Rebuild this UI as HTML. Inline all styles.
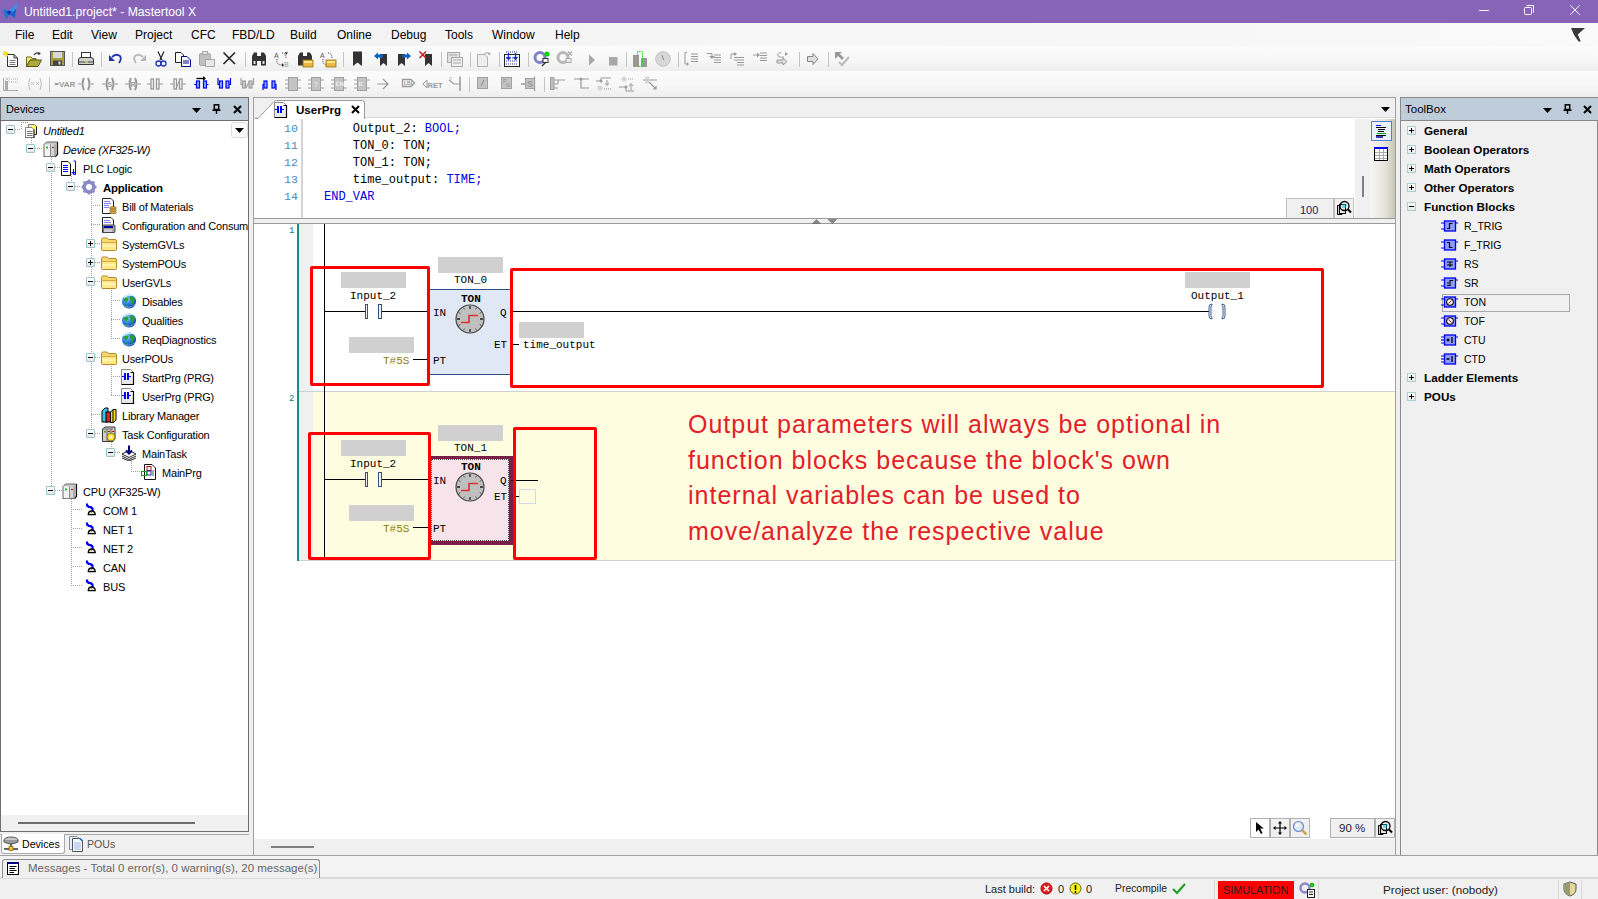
<!DOCTYPE html><html><head><meta charset="utf-8"><style>
*{margin:0;padding:0;box-sizing:border-box}
html,body{width:1598px;height:899px;overflow:hidden;background:#f0f0f0;font-family:"Liberation Sans",sans-serif;font-size:11px;color:#000}
.a{position:absolute}
.t{position:absolute;white-space:nowrap;line-height:1}
.m{font-family:"Liberation Mono",monospace}
.ic{position:absolute;overflow:visible}
.exp{position:absolute;width:9px;height:9px;border:1px solid #9cc4cc;border-radius:1px;background:linear-gradient(#fff,#e6e6e6)}
.exp:before{content:"";position:absolute;left:1px;top:3px;width:5px;height:1px;background:#000}
.exp.p:after{content:"";position:absolute;left:3px;top:1px;width:1px;height:5px;background:#000}
.vd{position:absolute;width:1px;background:repeating-linear-gradient(to bottom,#a0a0a0 0 1px,transparent 1px 2px)}
.hd{position:absolute;height:1px;background:repeating-linear-gradient(to right,#a0a0a0 0 1px,transparent 1px 2px)}
.tbx{position:absolute;width:9px;height:9px;border:1px solid #a8d0d4;background:linear-gradient(#fff,#e8e8e8)}
.tbx:before{content:"";position:absolute;left:1px;top:3px;width:5px;height:1px;background:#000}
.tbx.p:after{content:"";position:absolute;left:3px;top:1px;width:1px;height:5px;background:#000}
.gr{position:absolute;background:#d0d0d0}
.rb{position:absolute;border:3px solid #ff0000;border-radius:2px}
</style></head><body>
<svg width="0" height="0" style="position:absolute"><defs><symbol id="i_proj" viewBox="0 0 16 16"><path d="M7.5 12.5 V2.5 H13.5 L15.5 4.5 V12.5Z" fill="#ffff40" stroke="#777"/><path d="M9 4H13M10 6H14M9 8H14M10 10H14" stroke="#fff" stroke-dasharray="1 1"/><path d="M15.5 4.5V12.5H13" stroke="#222" fill="none"/><path d="M4.5 16 V5.5 H11 L13 7.5 V16Z" fill="#fff" stroke="#888"/><path d="M13 7.5V16H4.5" stroke="#222" fill="none"/><path d="M6 9.5H11.5M6 11.5H11.5M6 13.5H11.5" stroke="#777"/><path d="M0 0.5H8M0.5 0V8" stroke="#999" stroke-dasharray="1 1"/></symbol>
<symbol id="i_dev" viewBox="0 0 16 16"><path d="M1 3.5 L3.5 1 H14.5 V13.5 L12 16 H1Z" fill="#c8c8c8"/><path d="M1 3.5 H12 V16 H1Z" fill="#d4d4d4"/><path d="M1 3.5 H7 V16 H1Z" fill="#f4f4f4"/><path d="M1 16 V3.5 L3.5 1 H14.5" stroke="#666" fill="none"/><path d="M14.5 1 V13.5 L12 16 H1" stroke="#111" fill="none" stroke-width="1.2"/><path d="M7.5 3.5V16M12 3.5V16" stroke="#888"/><rect x="3" y="5.5" width="2" height="2" fill="#00d000"/><rect x="9" y="6" width="2" height="1" fill="#c00000"/></symbol>
<symbol id="i_plc" viewBox="0 0 16 16"><path d="M0.5 1.5 H7 L9.5 4 V15.5 H0.5Z" fill="#fff" stroke="#111"/><path d="M2 5.5H7M2 7.5H7M2 9.5H7M2 11.5H7" stroke="#0000ff"/><path d="M12.5 1 H14.5 V14.5 H12.5 M12.5 9 V14 M11 12 L12.5 14 L14 12" stroke="#0000ff" fill="none"/></symbol>
<symbol id="i_gear" viewBox="0 0 16 16"><circle cx="8" cy="8" r="6" fill="#8b8bc8" stroke="#6a6aa8"/><g stroke="#8b8bc8" stroke-width="2.4"><path d="M8 0.5V15.5M0.5 8H15.5M2.7 2.7L13.3 13.3M13.3 2.7L2.7 13.3"/></g><circle cx="8" cy="8" r="3" fill="#fff"/></symbol>
<symbol id="i_bom" viewBox="0 0 16 16"><path d="M1.5 0.5 H10 L12.5 3 V15.5 H1.5Z" fill="#fff" stroke="#222"/><path d="M3 3.5H9M3 5.5H10M3 7.5H8M3 9.5H8" stroke="#8080ff"/><ellipse cx="12" cy="10" rx="3.3" ry="1.4" fill="#d8b050" stroke="#8a6a20" stroke-width=".8"/><ellipse cx="12" cy="12.3" rx="3.3" ry="1.4" fill="#d8b050" stroke="#8a6a20" stroke-width=".8"/><ellipse cx="12" cy="14.5" rx="3.3" ry="1.4" fill="#d8b050" stroke="#8a6a20" stroke-width=".8"/></symbol>
<symbol id="i_cfg" viewBox="0 0 16 16"><path d="M1.5 0.5 H10 L12.5 3 V15.5 H1.5Z" fill="#fff" stroke="#222"/><path d="M3 3.5H9M3 5.5H10" stroke="#8080ff"/><rect x="2" y="8" width="12" height="7.5" rx="1" fill="#a8a8a8" stroke="#444"/><rect x="3" y="9" width="9" height="2" fill="#0000a0"/><path d="M4 12.5V15M6 12.5V15M8 12.5V15M10 12.5V15" stroke="#fff"/></symbol>
<symbol id="i_folder" viewBox="0 0 16 16"><path d="M0.5 3.5 Q0.5 2 2 2 H6 L7.5 3.5 H14 Q15.5 3.5 15.5 5 V13.5 Q15.5 14.5 14.5 14.5 H1.5 Q0.5 14.5 0.5 13.5Z" fill="#f8d868" stroke="#b58a2a"/><path d="M1 7 H15 V14 H1Z" fill="#ffe88a"/><path d="M1 10 H15" stroke="#fff3b0" stroke-width="2"/><path d="M0.5 6.5 H15.5" stroke="#c8a040" stroke-width=".8"/></symbol>
<symbol id="i_globe" viewBox="0 0 16 16"><defs><radialGradient id="ggl" cx=".35" cy=".3" r=".8"><stop offset="0" stop-color="#8fd0ff"/><stop offset=".5" stop-color="#2a7ae8"/><stop offset="1" stop-color="#0a2a90"/></radialGradient></defs><circle cx="8" cy="8.5" r="7" fill="url(#ggl)"/><path d="M2.5 6 Q5 3.5 7.5 5.5 Q7 8.5 5 9.5 Q3 8.5 2.5 6Z M9 3.5 Q12.5 3 14 6.5 Q13 9.5 11 12.5 Q9 11 9.8 8 Q8.5 6 9 3.5Z M4.5 11.5 Q7 11.5 7.5 14.5 Q5 14.5 4.5 11.5Z" fill="#2aa030"/><path d="M3 4.5 Q8 0 14.5 3.5" stroke="#e0f4ff" stroke-width="1.3" fill="none"/><path d="M1.5 12 Q8 17 14.5 11" stroke="#70b8f0" stroke-width=".8" fill="none"/></symbol>
<symbol id="i_prg" viewBox="0 0 16 16"><defs><linearGradient id="gprg" x1="0" y1="0" x2="0" y2="1"><stop offset="0" stop-color="#fff"/><stop offset="1" stop-color="#e4e4e4"/></linearGradient></defs><path d="M0.5 15.5 V0.5 H9.5 L12.5 3.5 V15.5Z" fill="url(#gprg)"/><path d="M0.5 15.5 V0.5 H9.5 L12.5 3.5" fill="none" stroke="#8a8a8a"/><path d="M9.5 3.5 H12.5 V15.5 H0.5" fill="none" stroke="#000" stroke-width="1.2"/><rect x="3" y="4" width="2" height="7" fill="#0000ff"/><rect x="6" y="4" width="2" height="7" fill="#0000ff"/><path d="M1 7.5H3M8 7.5H10" stroke="#0000ff"/></symbol>
<symbol id="i_lib" viewBox="0 0 16 16"><path d="M1 4 L4 1 H7 V15 H1Z" fill="#30c8e8" stroke="#000"/><rect x="5" y="5" width="4.5" height="10" fill="#e02020" stroke="#000"/><path d="M9.5 5 L12 2.5 H15 V13 L12.5 15.5 H9.5Z" fill="#ffe020" stroke="#000"/><path d="M12 2.5 V15.5" stroke="#000"/></symbol>
<symbol id="i_task" viewBox="0 0 16 16"><path d="M1.5 3 L4 1 H14 V13 L12 15.5 H1.5Z" fill="#d0d0d0" stroke="#333"/><path d="M6 3V15.5M10 3V15.5M1.5 3H12" stroke="#666" fill="none"/><rect x="3" y="5" width="2" height="1.5" fill="#00c000"/><rect x="7" y="5" width="2" height="1" fill="#c00000"/><rect x="11" y="5" width="2" height="1" fill="#c00000"/><circle cx="10" cy="11" r="4" fill="#ffe030" stroke="#806000" stroke-width=".8"/><circle cx="10" cy="11" r="1.5" fill="#fff"/></symbol>
<symbol id="i_mtask" viewBox="0 0 16 16"><path d="M1 9 L8 5.5 L15 9 L8 12.5Z M1 11 L8 14.5 L15 11 M1 13 L8 16 L15 13" fill="#fff" stroke="#111" stroke-width=".9"/><path d="M8 0.5 V8 M5 5.5 L8 8.5 L11 5.5" stroke="#000080" stroke-width="2" fill="none"/></symbol>
<symbol id="i_mprg" viewBox="0 0 16 16"><path d="M3.5 0.5 H11 L14.5 4 V15.5 H3.5Z" fill="#fff" stroke="#111"/><path d="M11 7H13M11 9H13M11 11H13" stroke="#555"/><rect x="6" y="2.5" width="4" height="4" fill="none" stroke="#b01010"/><rect x="6" y="7" width="4" height="4" fill="none" stroke="#2020c0"/><rect x="0.5" y="7.5" width="5" height="4" fill="none" stroke="#10a010"/></symbol>
<symbol id="i_cpu" viewBox="0 0 16 16"><path d="M1 3.5 L3.5 1 H14.5 V13.5 L12 16 H1Z" fill="#c8c8c8"/><path d="M1 3.5 H12 V16 H1Z" fill="#d4d4d4"/><path d="M1 3.5 H7 V16 H1Z" fill="#f4f4f4"/><path d="M1 16 V3.5 L3.5 1 H14.5" stroke="#666" fill="none"/><path d="M14.5 1 V13.5 L12 16 H1" stroke="#111" fill="none" stroke-width="1.2"/><path d="M7.5 3.5V16M12 3.5V16" stroke="#888"/><rect x="3" y="5.5" width="2" height="2" fill="#00d000"/><rect x="9" y="6" width="2" height="1" fill="#c00000"/></symbol>
<symbol id="i_conn" viewBox="0 0 16 16"><path d="M4 1.5 V3.5 L6 5 H7.5 L9.5 6.5 V9" stroke="#0000f0" stroke-width="2.2" fill="none" stroke-linejoin="bevel"/><path d="M5.3 12.6 Q5.3 9 8.7 9 Q12.2 9 12.2 12.6Z" fill="#e4e4dc" stroke="#000" stroke-width="1.3"/><path d="M8 10.5h1" stroke="#a0a000"/></symbol>
<symbol id="i_devtab" viewBox="0 0 16 16"><ellipse cx="8" cy="4" rx="7" ry="3" fill="#c8c8c8" stroke="#555"/><path d="M1 4 V6 Q8 10 15 6 V4" fill="#999" stroke="#555"/><path d="M8 8 V13 M1 13 H15" stroke="#333" stroke-width="1.5"/><rect x="6" y="10.5" width="4" height="4" fill="#f0c030" stroke="#906000" stroke-width=".7"/></symbol>
<symbol id="i_poutab" viewBox="0 0 16 16"><path d="M1.5 0.5 H9 L10.5 2 V13.5 H1.5Z" fill="#e8f0ff" stroke="#8090a0"/><path d="M4.5 2.5 H12 L14.5 5 V15.5 H4.5Z" fill="#f4f8ff" stroke="#555"/><path d="M6 7H13M6 9H13M6 11H13M6 13H13" stroke="#9ab8e0"/><path d="M12 2.5 L14.5 5" stroke="#2060c0" stroke-width="1.5"/></symbol>
<symbol id="i_msg" viewBox="0 0 16 16"><rect x="1.5" y="1.5" width="11" height="12" fill="#fff" stroke="#000"/><rect x="1" y="1" width="12" height="2" fill="#000080"/><path d="M3.5 5.5H10.5M3.5 7.5H9M3.5 9.5H10.5M3.5 11.5H8" stroke="#000"/></symbol>
<symbol id="tb_base" viewBox="0 0 17 16"><rect x="3.5" y="3" width="11" height="10" fill="#8c9cf8" stroke="#0000f0" stroke-width="1.3"/><path d="M0 5H3M0 11H3M14.5 5H17" stroke="#0000f0" stroke-width="1.2"/></symbol>
<symbol id="tb_rtrig" viewBox="0 0 17 16"><use href="#tb_base"/><path d="M6 10.5 H8.5 V5.5 H11.5" stroke="#000" fill="none" stroke-width="1.2"/></symbol>
<symbol id="tb_ftrig" viewBox="0 0 17 16"><use href="#tb_base"/><path d="M6 5.5 H8.5 V10.5 H11.5" stroke="#000" fill="none" stroke-width="1.2"/></symbol>
<symbol id="tb_rs" viewBox="0 0 17 16"><use href="#tb_base"/><path d="M6 6 H12 M6 9 H12 M9 6 V11" stroke="#000" fill="none" stroke-width="1.1"/></symbol>
<symbol id="tb_sr" viewBox="0 0 17 16"><use href="#tb_base"/><path d="M6 10.5 H9 V5.5 H12 M6 8H8" stroke="#000" fill="none" stroke-width="1.1"/></symbol>
<symbol id="tb_ton" viewBox="0 0 17 16"><use href="#tb_base"/><circle cx="9" cy="8" r="3.3" fill="#fff" stroke="#000" stroke-width="1.1"/><path d="M7.5 9.5 L10.5 6.5" stroke="#c00000"/></symbol>
<symbol id="tb_tof" viewBox="0 0 17 16"><use href="#tb_base"/><circle cx="9" cy="8" r="3.3" fill="#fff" stroke="#000" stroke-width="1.1"/><path d="M7.5 6.5 L10.5 9.5" stroke="#c00000"/></symbol>
<symbol id="tb_ctu" viewBox="0 0 17 16"><use href="#tb_base"/><path d="M0 8H3" stroke="#0000f0" stroke-width="1.2"/><path d="M5.5 8H8.5M7 6.5V9.5M11 5V11" stroke="#000" fill="none" stroke-width="1.3"/></symbol>
<symbol id="tb_ctd" viewBox="0 0 17 16"><use href="#tb_base"/><path d="M0 8H3" stroke="#0000f0" stroke-width="1.2"/><path d="M5.5 8H8.5M11 5V11" stroke="#000" fill="none" stroke-width="1.3"/></symbol>
<symbol id="i_zoomfit" viewBox="0 0 16 16"><path d="M1.5 5.5 H6 V14.5 H1.5Z" fill="#d0d0d0" stroke="#000"/><rect x="3.5" y="4.5" width="6" height="9" fill="#e8e8e8" stroke="#000"/><circle cx="8.5" cy="6" r="4.5" fill="none" stroke="#000" stroke-width="1.3"/><path d="M6 5H11M6 7H10" stroke="#00c8e0"/><path d="M11.5 9 L15 12.5" stroke="#000" stroke-width="2"/></symbol>
<symbol id="i_clock" viewBox="0 0 30 30"><circle cx="15" cy="15" r="14" fill="#c0c0c0" stroke="#444" stroke-width="1.2"/><g stroke="#222" stroke-width="1.3"><path d="M15 2V5M15 25V28M2 15H5M25 15H28"/></g><g stroke="#444" stroke-width=".9"><path d="M21.5 3.7L20.5 5.4M26.3 8.5L24.6 9.5M26.3 21.5L24.6 20.5M21.5 26.3L20.5 24.6M8.5 26.3L9.5 24.6M3.7 21.5L5.4 20.5M3.7 8.5L5.4 9.5M8.5 3.7L9.5 5.4"/></g><path d="M6 18.5 H14 V11.5 H23" stroke="#e03030" stroke-width="1.6" fill="none"/></symbol>
</defs></svg>
<div class="a" style="left:0px;top:0px;width:1598px;height:23px;background:#8764b8"></div>
<svg class="ic" style="left:0px;top:0px" width="20" height="21" viewBox="0 0 20 21"><path d="M2.5 9 L8.8 10.6 L17.5 3 L15 17.8 L9.8 14.8 L6 19 Z" fill="#3d8fe0"/><path d="M6 19 L2.5 9 L8.8 10.6 L9.8 14.8Z" fill="#2a70d0"/><path d="M9.8 14.8 L15 17.8 L16 9Z" fill="#1f5cc8"/><path d="M6.5 12.6 L9 10.6 L11.6 11.8 L9.6 14.8 Z" fill="#0a2eaa"/></svg>
<div class="t" style="left:24px;top:6px;font-size:12.2px;color:#fff">Untitled1.project* - Mastertool X</div>
<div class="a" style="left:1479px;top:10px;width:10px;height:1px;background:#fff"></div>
<div class="a" style="left:1524px;top:7px;width:8px;height:8px;border:1px solid #fff;border-radius:1.5px"></div>
<div class="a" style="left:1526px;top:5px;width:8px;height:8px;border-top:1px solid #fff;border-right:1px solid #fff;border-radius:1.5px"></div>
<svg class="ic" style="left:1570px;top:5px" width="10" height="10" viewBox="0 0 10 10"><path d="M0.3 0.3 L9.7 9.7 M9.7 0.3 L0.3 9.7" stroke="#fff" stroke-width="1"/></svg>
<div class="a" style="left:0px;top:23px;width:1598px;height:23px;background:linear-gradient(to right,#f0f0f0,#f5f5f5 40%,#f9f9f9)"></div>
<div class="t" style="left:15px;top:29px;font-size:12px">File</div>
<div class="t" style="left:52px;top:29px;font-size:12px">Edit</div>
<div class="t" style="left:91px;top:29px;font-size:12px">View</div>
<div class="t" style="left:135px;top:29px;font-size:12px">Project</div>
<div class="t" style="left:191px;top:29px;font-size:12px">CFC</div>
<div class="t" style="left:232px;top:29px;font-size:12px">FBD/LD</div>
<div class="t" style="left:290px;top:29px;font-size:12px">Build</div>
<div class="t" style="left:337px;top:29px;font-size:12px">Online</div>
<div class="t" style="left:391px;top:29px;font-size:12px">Debug</div>
<div class="t" style="left:445px;top:29px;font-size:12px">Tools</div>
<div class="t" style="left:492px;top:29px;font-size:12px">Window</div>
<div class="t" style="left:555px;top:29px;font-size:12px">Help</div>
<svg class="ic" style="left:1570px;top:27px" width="16" height="16" viewBox="0 0 16 16"><path d="M1 1 H15 L7.8 7.6 L10.8 14.5 H8.6 L4.2 8.2Z" fill="#3a3a3a"/></svg>
<div class="a" style="left:0px;top:46px;width:1598px;height:25px;background:linear-gradient(#fcfcfc,#f7f7f7 55%,#eeeeee)"></div>
<div class="a" style="left:0px;top:71px;width:1598px;height:26px;background:linear-gradient(#fcfcfc,#f7f7f7 55%,#eeeeee)"></div>
<svg class="ic" style="left:3px;top:51px" width="16" height="16" viewBox="0 0 16 16"><path d="M4.5 3.5 H11 L14.5 7 V15.5 H4.5Z" fill="#fff" stroke="#333"/><path d="M11 3.5V7H14.5" fill="none" stroke="#333"/><path d="M6.5 9.5H12.5M6.5 11.5H12.5M6.5 13.5H12.5" stroke="#777"/><path d="M0 0 L5 5 M0 4 L5 1 M2.5 0 V6 M0 2.5 H6" stroke="#f0e020" stroke-width="1.2"/></svg>
<svg class="ic" style="left:26px;top:51px" width="16" height="16" viewBox="0 0 16 16"><path d="M0.5 6 H5 L6 7.5 H10 V9 H4 L0.5 15.5Z" fill="#f8f070" stroke="#6a6a20"/><path d="M0.5 15.5 L4 9 H15.5 L12 15.5Z" fill="#b0a840" stroke="#5a5a10"/><path d="M8 4 Q10 0.5 14 2.5" stroke="#333" fill="none" stroke-width="1.2"/><path d="M12.5 1 L15 3 L12 4" fill="#333"/></svg>
<svg class="ic" style="left:50px;top:51px" width="16" height="16" viewBox="0 0 16 16"><rect x="0.5" y="0.5" width="14" height="14" fill="#a8a040" stroke="#555"/><rect x="3" y="1" width="9" height="6" fill="#d8d8d8"/><rect x="3" y="9.5" width="9" height="5" fill="#444"/><rect x="8.5" y="10.5" width="2" height="3" fill="#ddd"/></svg>
<div class="a" style="left:72px;top:52px;width:1px;height:15px;background:#c4c4c4"></div>
<svg class="ic" style="left:78px;top:51px" width="16" height="16" viewBox="0 0 16 16"><rect x="3.5" y="1.5" width="9" height="5" fill="#fff" stroke="#333"/><path d="M0.5 9 Q0.5 6.5 3 6.5 H13 Q15.5 6.5 15.5 9 V13.5 H0.5Z" fill="#d0d0d0" stroke="#333"/><rect x="1" y="10" width="14" height="2" fill="#888"/><rect x="7" y="10.5" width="3" height="1" fill="#ff0"/></svg>
<div class="a" style="left:101px;top:52px;width:1px;height:15px;background:#c4c4c4"></div>
<svg class="ic" style="left:108px;top:51px" width="16" height="16" viewBox="0 0 16 16"><path d="M4 6 Q8 2 12 5 Q14 8 11 12" stroke="#2030b0" stroke-width="1.8" fill="none"/><path d="M1 4 L1 10 L7 10Z" fill="#2030b0"/></svg>
<svg class="ic" style="left:131px;top:51px" width="16" height="16" viewBox="0 0 16 16"><path d="M12 6 Q8 2 4 5 Q2 8 5 12" stroke="#b8b8b8" stroke-width="1.8" fill="none"/><path d="M15 4 L15 10 L9 10Z" fill="#b8b8b8"/></svg>
<svg class="ic" style="left:153px;top:51px" width="16" height="16" viewBox="0 0 16 16"><path d="M5 0.5 L9 9 M11 0.5 L7 9" stroke="#222" stroke-width="1.2"/><circle cx="5.5" cy="12.5" r="2.5" fill="none" stroke="#2030c0" stroke-width="1.3"/><circle cx="10.5" cy="12.5" r="2.5" fill="none" stroke="#2030c0" stroke-width="1.3"/></svg>
<svg class="ic" style="left:175px;top:51px" width="16" height="16" viewBox="0 0 16 16"><path d="M0.5 1.5 H6 L8.5 4 V11.5 H0.5Z" fill="#fff" stroke="#222"/><path d="M6.5 5.5 H12 L15.5 9 V15.5 H6.5Z" fill="#fff" stroke="#000090"/><path d="M8 10H14M8 12H14" stroke="#000090"/></svg>
<svg class="ic" style="left:199px;top:51px" width="16" height="16" viewBox="0 0 16 16"><rect x="0.5" y="2.5" width="11" height="12" rx="1.5" fill="#c0c0c0" stroke="#a8a8a8"/><rect x="3.5" y="0.5" width="5" height="3" fill="#e0e0e0" stroke="#a8a8a8"/><rect x="6.5" y="8.5" width="9" height="7" fill="#e8e8e8" stroke="#a8a8a8"/></svg>
<svg class="ic" style="left:222px;top:51px" width="16" height="16" viewBox="0 0 16 16"><path d="M1.5 1.5 L13 13 M13 1.5 L1.5 13" stroke="#222" stroke-width="1.6"/></svg>
<div class="a" style="left:245px;top:52px;width:1px;height:15px;background:#c4c4c4"></div>
<svg class="ic" style="left:251px;top:51px" width="16" height="16" viewBox="0 0 16 16"><path d="M1 5 L3 1.5 H6 V5 H10 V1.5 H13 L15 5 V14.5 H10 V10 H6 V14.5 H1Z" fill="#333"/><rect x="2.5" y="10" width="2" height="3" fill="#ddd"/><rect x="11.5" y="10" width="2" height="3" fill="#ddd"/></svg>
<svg class="ic" style="left:274px;top:51px" width="16" height="16" viewBox="0 0 16 16"><text x="0" y="7" font-size="7" fill="#555" font-family="Liberation Sans">A</text><text x="10" y="15.5" font-size="7" fill="#999" font-family="Liberation Sans">B</text><path d="M3 8 Q2 14 8 14 M8 2 Q12 2 12 7" stroke="#333" stroke-dasharray="1 1" fill="none"/><path d="M8 12 L10 14 L8 16Z M11 1 L14 1.5 L12 4Z" fill="#333"/></svg>
<svg class="ic" style="left:297px;top:51px" width="16" height="16" viewBox="0 0 16 16"><path d="M1 5 L3 1.5 H6 V5 H10 V1.5 H13 L15 5 V14.5 H1Z" fill="#333"/><rect x="6" y="9" width="10" height="7" fill="#e8b840" stroke="#a07010" stroke-width=".8"/><rect x="7" y="10" width="8" height="2" fill="#ffe890"/></svg>
<svg class="ic" style="left:320px;top:51px" width="16" height="16" viewBox="0 0 16 16"><text x="0" y="7" font-size="7" fill="#555" font-family="Liberation Sans">A</text><path d="M3 8 Q2 14 8 14 M8 2 Q12 2 12 7" stroke="#333" stroke-dasharray="1 1" fill="none"/><rect x="6" y="9" width="10" height="7" fill="#e8b840" stroke="#a07010" stroke-width=".8"/><rect x="7" y="10" width="8" height="2" fill="#ffe890"/></svg>
<div class="a" style="left:343px;top:52px;width:1px;height:15px;background:#c4c4c4"></div>
<svg class="ic" style="left:350px;top:51px" width="16" height="16" viewBox="0 0 16 16"><path d="M3 0.5 H12 V15 L7.5 11.5 L3 15Z" fill="#333"/></svg>
<svg class="ic" style="left:373px;top:51px" width="16" height="16" viewBox="0 0 16 16"><path d="M7 3 H14 V15 L10.5 12 L7 15Z" fill="#333"/><path d="M1 5 L5 1.5 V3.5 H10 V6.5 H5 V8.5Z" fill="#1060c0"/></svg>
<svg class="ic" style="left:396px;top:51px" width="16" height="16" viewBox="0 0 16 16"><path d="M2 3 H9 V15 L5.5 12 L2 15Z" fill="#333"/><path d="M15 5 L11 1.5 V3.5 H6 V6.5 H11 V8.5Z" fill="#1060c0"/></svg>
<svg class="ic" style="left:419px;top:51px" width="16" height="16" viewBox="0 0 16 16"><path d="M6 3 H13 V15 L9.5 12 L6 15Z" fill="#333"/><path d="M0.5 0.5 L7 7 M7 0.5 L0.5 7" stroke="#c02020" stroke-width="1.6"/></svg>
<div class="a" style="left:441px;top:52px;width:1px;height:15px;background:#c4c4c4"></div>
<svg class="ic" style="left:447px;top:51px" width="16" height="16" viewBox="0 0 16 16"><rect x="0.5" y="1.5" width="12" height="10" fill="#e0e0e0" stroke="#aaa"/><rect x="4.5" y="6.5" width="11" height="9" fill="#eee" stroke="#aaa"/><path d="M6 9H14M6 12H14M2 4H10" stroke="#aaa"/></svg>
<div class="a" style="left:470px;top:52px;width:1px;height:15px;background:#c4c4c4"></div>
<svg class="ic" style="left:476px;top:51px" width="16" height="16" viewBox="0 0 16 16"><path d="M1.5 3.5 H9 L11.5 6 V15.5 H1.5Z" fill="#eee" stroke="#b0b0b0"/><path d="M8 3 Q11 0 14 3" stroke="#aaa" fill="none"/><path d="M13 1 L15 3.5 L12 4Z" fill="#aaa"/></svg>
<div class="a" style="left:499px;top:52px;width:1px;height:15px;background:#c4c4c4"></div>
<svg class="ic" style="left:504px;top:51px" width="16" height="16" viewBox="0 0 16 16"><rect x="0.5" y="3.5" width="15" height="12" fill="#fff" stroke="#222"/><path d="M2 1H14M2 7H14M2 10H14M2 13H14" stroke="#2030a0" stroke-dasharray="1 1"/><path d="M4.5 2 V8 M2.5 6 L4.5 8.5 L6.5 6 M11.5 2 V8 M9.5 6 L11.5 8.5 L13.5 6" stroke="#2030c0" stroke-width="1.3" fill="none"/></svg>
<div class="a" style="left:528px;top:52px;width:1px;height:15px;background:#c4c4c4"></div>
<svg class="ic" style="left:534px;top:51px" width="16" height="16" viewBox="0 0 16 16"><circle cx="6" cy="6.5" r="5" fill="none" stroke="#8080c8" stroke-width="3"/><circle cx="13" cy="3" r="2.6" fill="#10d010"/><rect x="9" y="7.5" width="5" height="4" fill="#fff" stroke="#333"/><path d="M8 15 L12 11" stroke="#333" stroke-width="1.2"/></svg>
<svg class="ic" style="left:557px;top:51px" width="16" height="16" viewBox="0 0 16 16"><circle cx="6" cy="6.5" r="5" fill="none" stroke="#b8b8b8" stroke-width="3"/><path d="M11 0.5 L15 4.5 M15 0.5 L11 4.5" stroke="#aaa" stroke-width="1.2"/><rect x="9" y="7.5" width="5" height="4" fill="#eee" stroke="#aaa"/></svg>
<svg class="ic" style="left:587px;top:53px" width="10" height="14" viewBox="0 0 10 14"><path d="M2 1.5 L8 7 L2 12.5Z" fill="#a8a8a8"/></svg>
<svg class="ic" style="left:609px;top:57px" width="9" height="9" viewBox="0 0 9 9"><rect x="0" y="0" width="8.5" height="8.5" fill="#a8a8a8"/></svg>
<div class="a" style="left:626px;top:52px;width:1px;height:15px;background:#c4c4c4"></div>
<svg class="ic" style="left:632px;top:51px" width="16" height="16" viewBox="0 0 16 16"><rect x="1" y="4" width="6" height="12" fill="#999"/><rect x="9" y="7" width="6" height="9" fill="#999"/><rect x="5.5" y="0.5" width="5" height="15" fill="none" stroke="#20e020" stroke-dasharray="1 .6"/></svg>
<svg class="ic" style="left:655px;top:51px" width="16" height="16" viewBox="0 0 16 16"><circle cx="8" cy="8" r="7.3" fill="#d8d8d8" stroke="#c0c0c0"/><path d="M7 4 L8.5 9" stroke="#888"/></svg>
<div class="a" style="left:678px;top:52px;width:1px;height:15px;background:#c4c4c4"></div>
<svg class="ic" style="left:683px;top:51px" width="16" height="16" viewBox="0 0 16 16"><path d="M4 1.5 H2 V13 H5" stroke="#999" fill="none"/><path d="M4 11 L6 13 L4 15" fill="#999"/><path d="M8 3H15M8 5.5H15M8 8H15M8 10.5H15" stroke="#999"/></svg>
<svg class="ic" style="left:706px;top:51px" width="16" height="16" viewBox="0 0 16 16"><path d="M1 2.5 H6 V6" stroke="#999" fill="none"/><path d="M3 5 L6 8 L9 5Z" fill="#999"/><path d="M8 4H15M8 6.5H15M8 9H15M8 11.5H15" stroke="#999"/></svg>
<svg class="ic" style="left:729px;top:51px" width="16" height="16" viewBox="0 0 16 16"><path d="M2 8 V3 H6" stroke="#999" fill="none"/><path d="M5 1 L8 3 L5 5Z" fill="#999"/><path d="M5 9H15M8 11.5H15M8 14H15M5 6.5H15" stroke="#999"/></svg>
<svg class="ic" style="left:752px;top:51px" width="16" height="16" viewBox="0 0 16 16"><path d="M1 4 H6" stroke="#999"/><path d="M5 1.5 L8 4 L5 6.5Z" fill="#999"/><path d="M8 2H15M8 4.5H15M8 7H15M8 9.5H15" stroke="#999"/></svg>
<svg class="ic" style="left:776px;top:51px" width="16" height="16" viewBox="0 0 16 16"><path d="M5 1.5 Q1 2 2 5 Q4 7 8 6" stroke="#999" fill="none"/><path d="M9 1 L12 3 L9 5Z" fill="#999"/><path d="M1 9 H7 V7 L11 10.5 L7 14 V12 H1Z" fill="#ddd" stroke="#999"/></svg>
<div class="a" style="left:799px;top:52px;width:1px;height:15px;background:#c4c4c4"></div>
<svg class="ic" style="left:806px;top:51px" width="16" height="16" viewBox="0 0 16 16"><path d="M1.5 5.5 H7 V2.5 L12 8 L7 13.5 V10.5 H1.5Z" fill="#ddd" stroke="#888"/></svg>
<div class="a" style="left:828px;top:52px;width:1px;height:15px;background:#c4c4c4"></div>
<svg class="ic" style="left:834px;top:51px" width="16" height="16" viewBox="0 0 16 16"><path d="M1 1 H8 L6 3 L10 7 L8 9 L4 5 L1 8Z" fill="#999"/><path d="M5 11 L8 14 L15 6" stroke="#bbb" stroke-width="2" fill="none"/></svg>
<div class="a" style="left:49px;top:77px;width:1px;height:15px;background:#c4c4c4"></div>
<svg class="ic" style="left:3px;top:76px" width="16" height="16" viewBox="0 0 16 16"><path d="M0.5 2 V14.5 H15" stroke="#aaa" fill="none"/><rect x="2" y="5" width="3" height="10" fill="#aaa"/><path d="M6 3H15M6 6H15" stroke="#aaa" stroke-dasharray="1 1"/><path d="M2 1 L6 5 M6 1 L2 5" stroke="#ccc"/></svg>
<svg class="ic" style="left:27px;top:76px" width="16" height="16" viewBox="0 0 16 16"><path d="M3 2 Q0 8 3 14 M13 2 Q16 8 13 14" stroke="#bbb" fill="none"/><path d="M4 6 L7 9 M7 6 L4 9 M9 6 L12 9 M12 6 L9 9" stroke="#bbb"/></svg>
<svg class="ic" style="left:55px;top:76px" width="17" height="16" viewBox="0 0 17 16"><rect x="0" y="7" width="3.5" height="2" fill="#999"/><text x="4" y="11" font-size="8" font-weight="bold" fill="#999" font-family="Liberation Sans">VAR</text></svg>
<svg class="ic" style="left:78px;top:76px" width="16" height="16" viewBox="0 0 16 16"><path d="M0 8H3M13 8H16" stroke="#999"/><path d="M6 2 Q3 8 6 14" stroke="#999" stroke-width="2" fill="none"/><path d="M10 2 Q13 8 10 14" stroke="#999" stroke-width="2" fill="none"/></svg>
<svg class="ic" style="left:102px;top:76px" width="16" height="16" viewBox="0 0 16 16"><path d="M0 8H3M13 8H16" stroke="#999"/><path d="M6 2 Q3 8 6 14" stroke="#999" stroke-width="2" fill="none"/><path d="M10 2 Q13 8 10 14" stroke="#999" stroke-width="2" fill="none"/><text x="5.5" y="11" font-size="7" fill="#999" font-weight="bold" font-family="Liberation Sans">S</text></svg>
<svg class="ic" style="left:125px;top:76px" width="16" height="16" viewBox="0 0 16 16"><path d="M0 8H3M13 8H16" stroke="#999"/><path d="M6 2 Q3 8 6 14" stroke="#999" stroke-width="2" fill="none"/><path d="M10 2 Q13 8 10 14" stroke="#999" stroke-width="2" fill="none"/><text x="5.5" y="11" font-size="7" fill="#999" font-weight="bold" font-family="Liberation Sans">R</text></svg>
<svg class="ic" style="left:147px;top:76px" width="16" height="16" viewBox="0 0 16 16"><path d="M0 8H4M12 8H16" stroke="#999"/><rect x="4" y="3" width="2.5" height="10" fill="none" stroke="#999" stroke-width="1.3"/><rect x="9.5" y="3" width="2.5" height="10" fill="none" stroke="#999" stroke-width="1.3"/></svg>
<svg class="ic" style="left:170px;top:76px" width="16" height="16" viewBox="0 0 16 16"><path d="M0 8H4M12 8H16" stroke="#999"/><rect x="4" y="3" width="2.5" height="10" fill="none" stroke="#999" stroke-width="1.3"/><rect x="9.5" y="3" width="2.5" height="10" fill="none" stroke="#999" stroke-width="1.3"/><path d="M6 13 L10 3" stroke="#999"/></svg>
<svg class="ic" style="left:285px;top:76px" width="16" height="16" viewBox="0 0 16 16"><rect x="3.5" y="1.5" width="9" height="13" fill="#c4c4c4" stroke="#a0a0a0"/><path d="M0 4H3.5M0 8H3.5M0 12H3.5M12.5 4H16M12.5 12H16" stroke="#a0a0a0"/></svg>
<svg class="ic" style="left:308px;top:76px" width="16" height="16" viewBox="0 0 16 16"><rect x="3.5" y="1.5" width="9" height="13" fill="#c4c4c4" stroke="#a0a0a0"/><path d="M0 4H3.5M0 8H3.5M0 12H3.5M12.5 4H16M12.5 12H16" stroke="#a0a0a0"/><text x="5.5" y="11" font-size="8" fill="#eee" font-family="Liberation Sans">?</text></svg>
<svg class="ic" style="left:331px;top:76px" width="16" height="16" viewBox="0 0 16 16"><rect x="3.5" y="1.5" width="9" height="13" fill="#c4c4c4" stroke="#a0a0a0"/><path d="M0 4H3.5M0 8H3.5M0 12H3.5M12.5 4H16M12.5 12H16" stroke="#a0a0a0"/><text x="4.5" y="10" font-size="6" fill="#eee" font-weight="bold" font-family="Liberation Sans">EN</text></svg>
<svg class="ic" style="left:354px;top:76px" width="16" height="16" viewBox="0 0 16 16"><rect x="3.5" y="1.5" width="9" height="13" fill="#c4c4c4" stroke="#a0a0a0"/><path d="M0 4H3.5M0 8H3.5M0 12H3.5M12.5 4H16M12.5 12H16" stroke="#a0a0a0"/><text x="4.5" y="10" font-size="6" fill="#eee" font-weight="bold" font-family="Liberation Sans">E</text></svg>
<svg class="ic" style="left:377px;top:76px" width="12" height="16" viewBox="0 0 12 16"><path d="M0 8H11M6 3 L11 8 L6 13" stroke="#999" fill="none" stroke-width="1.2"/></svg>
<svg class="ic" style="left:402px;top:76px" width="13" height="16" viewBox="0 0 13 16"><path d="M0.5 3.5 H9 L12.5 7 L9 10.5 H0.5Z" fill="none" stroke="#999" stroke-width="1.3"/><text x="2" y="9" font-size="5" fill="#999" font-family="Liberation Sans" font-weight="bold">LBL</text></svg>
<svg class="ic" style="left:423px;top:76px" width="17" height="16" viewBox="0 0 17 16"><path d="M0 8 L4 4 V12Z" fill="none" stroke="#999"/><text x="4.5" y="11.5" font-size="7.5" fill="#999" font-weight="bold" font-family="Liberation Sans">RET</text></svg>
<svg class="ic" style="left:448px;top:76px" width="13" height="16" viewBox="0 0 13 16"><path d="M12 0.5V15" stroke="#999" stroke-width="1.5"/><path d="M1 4 L6 8 H12" stroke="#999" stroke-width="1.2" fill="none"/><path d="M1 1 L4 4 M4 1 L1 4" stroke="#ccc"/></svg>
<div class="a" style="left:469px;top:77px;width:1px;height:15px;background:#c4c4c4"></div>
<svg class="ic" style="left:477px;top:76px" width="11" height="14" viewBox="0 0 11 14"><rect x="0.5" y="1.5" width="10" height="11" fill="#c4c4c4" stroke="#a0a0a0"/><path d="M4 10 L7 4" stroke="#888"/></svg>
<svg class="ic" style="left:501px;top:76px" width="11" height="14" viewBox="0 0 11 14"><rect x="0.5" y="1.5" width="10" height="11" fill="#c4c4c4" stroke="#a0a0a0"/><text x="2" y="7" font-size="5" fill="#888" font-family="Liberation Sans">P</text><text x="5" y="11" font-size="5" fill="#888" font-family="Liberation Sans">N</text></svg>
<svg class="ic" style="left:521px;top:76px" width="15" height="16" viewBox="0 0 15 16"><path d="M0 8H4M13.5 0.5V15" stroke="#999" stroke-width="1.3"/><rect x="4.5" y="2.5" width="9" height="10" fill="#c4c4c4" stroke="#a0a0a0"/><text x="6" y="11" font-size="9" fill="#999" font-weight="bold" font-family="Liberation Sans">S</text></svg>
<div class="a" style="left:544px;top:77px;width:1px;height:15px;background:#c4c4c4"></div>
<svg class="ic" style="left:550px;top:76px" width="16" height="16" viewBox="0 0 16 16"><rect x="0.5" y="1.5" width="3.5" height="12" fill="#c0c0c0" stroke="#a0a0a0"/><path d="M4 4H8M4 8H8M4 12H8M8 8V4H15" stroke="#999" fill="none"/></svg>
<svg class="ic" style="left:574px;top:76px" width="16" height="16" viewBox="0 0 16 16"><path d="M0 3H15M7 3V12H15" stroke="#999" stroke-width="1.2" fill="none"/><circle cx="7" cy="3" r="1.5" fill="#999"/></svg>
<svg class="ic" style="left:596px;top:76px" width="16" height="16" viewBox="0 0 16 16"><path d="M0 5H5M5 2V5M5 2H15M11 4V9M9 7L11 9.5L13 7" stroke="#999" fill="none"/><circle cx="5" cy="5" r="1.5" fill="#999"/><path d="M2 10 L6 14 M6 10 L2 14M4 9V15M1 12H7" stroke="#ccc"/><path d="M8 13H15" stroke="#999" stroke-dasharray="1 1"/></svg>
<svg class="ic" style="left:619px;top:76px" width="16" height="16" viewBox="0 0 16 16"><path d="M0 11H7M7 11V15H15M12 14V8M10 10L12 7.5L14 10" stroke="#999" fill="none"/><circle cx="7" cy="11" r="1.5" fill="#999"/><path d="M3 1 L7 5 M7 1 L3 5M5 0V6M2 3H8" stroke="#ccc"/><path d="M9 3H15" stroke="#999" stroke-dasharray="1 1"/></svg>
<svg class="ic" style="left:643px;top:76px" width="16" height="16" viewBox="0 0 16 16"><path d="M0 4H14" stroke="#999"/><path d="M2 0.5 L6 7.5 M6 0.5 L2 7.5 M4 0V8M0.5 4H7.5" stroke="#ccc"/><path d="M6 6 L13 13M10 13H13V10" stroke="#999" stroke-width="1.2" fill="none"/></svg>
<svg class="ic" style="left:193px;top:76px" width="16" height="16" viewBox="0 0 16 16"><path d="M3.5 2.5H11" stroke="#000" stroke-width="1.3"/><path d="M10 0 L13 2.5 L10 5Z" fill="#000"/><path d="M1 8.5H3.5M13.5 8.5H15.5" stroke="#0000f0" stroke-width="1.2"/><rect x="3.5" y="5" width="3" height="7" fill="#80b0ff" stroke="#0000f0" stroke-width="1.2"/><rect x="10.5" y="5" width="3" height="7" fill="#80b0ff" stroke="#0000f0" stroke-width="1.2"/></svg>
<svg class="ic" style="left:217px;top:76px" width="16" height="16" viewBox="0 0 16 16"><path d="M1 2V8.5H2.5M12 8.5H13.5V2" stroke="#0000f0" stroke-width="1.2" fill="none"/><rect x="2.5" y="5" width="3" height="7" fill="#80b0ff" stroke="#0000f0" stroke-width="1.2"/><rect x="9" y="5" width="3" height="7" fill="#80b0ff" stroke="#0000f0" stroke-width="1.2"/></svg>
<svg class="ic" style="left:240px;top:76px" width="16" height="16" viewBox="0 0 16 16"><path d="M1 2V8.5H2.5M12 8.5H13.5V2M6 12L9 6" stroke="#a0a0a0" stroke-width="1.2" fill="none"/><rect x="2.5" y="5" width="3" height="7" fill="#c8c8c8" stroke="#a0a0a0" stroke-width="1.2"/><rect x="9" y="5" width="3" height="7" fill="#c8c8c8" stroke="#a0a0a0" stroke-width="1.2"/></svg>
<svg class="ic" style="left:262px;top:76px" width="16" height="16" viewBox="0 0 16 16"><path d="M1 14V8.5H2M13 8.5H14V14" stroke="#0000f0" stroke-width="1.2" fill="none"/><rect x="2" y="5" width="3" height="7" fill="#80b0ff" stroke="#0000f0" stroke-width="1.2"/><rect x="10" y="5" width="3" height="7" fill="#80b0ff" stroke="#0000f0" stroke-width="1.2"/></svg>
<div class="a" style="left:0px;top:97px;width:249px;height:735px;border:1px solid #6e6e6e;background:#fff"></div>
<div class="a" style="left:1px;top:98px;width:247px;height:23px;background:#bfcddb;border-bottom:1px solid #6e6e6e"></div>
<div class="t" style="left:6px;top:104px;font-size:10.9px">Devices</div>
<svg class="ic" style="left:192px;top:108px" width="9" height="5" viewBox="0 0 9 5"><path d="M0 0 L9 0 L4.5 5Z" fill="#000"/></svg>
<svg class="ic" style="left:212px;top:103px" width="9" height="11" viewBox="0 0 9 11"><rect x="2.3" y="1.8" width="4.4" height="4.7" fill="none" stroke="#000" stroke-width="1.5"/><path d="M0.5 7.3 H8.5 M4.5 7 V11" stroke="#000" stroke-width="1.4"/></svg>
<svg class="ic" style="left:233px;top:105px" width="9" height="9" viewBox="0 0 9 9"><path d="M1 1 L8 8 M8 1 L1 8" stroke="#000" stroke-width="2"/></svg>
<div class="a" style="left:1px;top:815px;width:247px;height:16px;background:#f0f0f0"></div>
<div class="a" style="left:18px;top:822px;width:177px;height:2px;background:#6e6e6e"></div>
<div class="a" style="left:231px;top:122px;width:17px;height:16px;background:#fafafa;border:1px solid #dcdcdc;border-radius:3px"></div>
<svg class="ic" style="left:235px;top:128px" width="9" height="5" viewBox="0 0 9 5"><path d="M0 0 L9 0 L4.5 5Z" fill="#000"/></svg>
<div class="vd" style="left:51px;top:153px;height:338px"></div>
<div class="vd" style="left:71px;top:172px;height:15px"></div>
<div class="vd" style="left:91px;top:191px;height:243px"></div>
<div class="vd" style="left:111px;top:286px;height:53px"></div>
<div class="vd" style="left:111px;top:362px;height:34px"></div>
<div class="vd" style="left:111px;top:438px;height:15px"></div>
<div class="vd" style="left:131px;top:457px;height:15px"></div>
<div class="vd" style="left:71px;top:495px;height:91px"></div>
<div class="vd" style="left:31px;top:134px;height:15px"></div>
<div style="position:absolute;left:1px;top:121px;width:247px;height:694px;overflow:hidden">
<div class="hd" style="left:14px;top:8px;width:6px"></div>
<div class="exp " style="left:5px;top:4px"></div>
<svg class="ic" style="left:20px;top:1px" width="16" height="16"><use href="#i_proj"/></svg>
<div class="t" style="left:42px;top:5px;font-size:11px;letter-spacing:-0.2px;font-style:italic">Untitled1</div>
<div class="hd" style="left:34px;top:27px;width:8px"></div>
<div class="exp " style="left:25px;top:23px"></div>
<svg class="ic" style="left:42px;top:20px" width="16" height="16"><use href="#i_dev"/></svg>
<div class="t" style="left:62px;top:24px;font-size:11px;letter-spacing:-0.2px;font-style:italic">Device (XF325-W)</div>
<div class="hd" style="left:54px;top:46px;width:6px"></div>
<div class="exp " style="left:45px;top:42px"></div>
<svg class="ic" style="left:60px;top:39px" width="16" height="16"><use href="#i_plc"/></svg>
<div class="t" style="left:82px;top:43px;font-size:11px;letter-spacing:-0.2px;">PLC Logic</div>
<div class="hd" style="left:74px;top:65px;width:6px"></div>
<div class="exp " style="left:65px;top:61px"></div>
<svg class="ic" style="left:80px;top:58px" width="16" height="16"><use href="#i_gear"/></svg>
<div class="t" style="left:102px;top:62px;font-size:11px;letter-spacing:-0.2px;font-weight:bold;font-size:11.4px">Application</div>
<div class="hd" style="left:90px;top:84px;width:10px"></div>
<svg class="ic" style="left:100px;top:77px" width="16" height="16"><use href="#i_bom"/></svg>
<div class="t" style="left:121px;top:81px;font-size:11px;letter-spacing:-0.2px;">Bill of Materials</div>
<div class="hd" style="left:90px;top:103px;width:10px"></div>
<svg class="ic" style="left:100px;top:96px" width="16" height="16"><use href="#i_cfg"/></svg>
<div class="t" style="left:121px;top:100px;font-size:11px;letter-spacing:-0.2px;">Configuration and Consumption</div>
<div class="hd" style="left:94px;top:122px;width:6px"></div>
<div class="exp p" style="left:85px;top:118px"></div>
<svg class="ic" style="left:100px;top:115px" width="16" height="16"><use href="#i_folder"/></svg>
<div class="t" style="left:121px;top:119px;font-size:11px;letter-spacing:-0.2px;">SystemGVLs</div>
<div class="hd" style="left:94px;top:141px;width:6px"></div>
<div class="exp p" style="left:85px;top:137px"></div>
<svg class="ic" style="left:100px;top:134px" width="16" height="16"><use href="#i_folder"/></svg>
<div class="t" style="left:121px;top:138px;font-size:11px;letter-spacing:-0.2px;">SystemPOUs</div>
<div class="hd" style="left:94px;top:160px;width:6px"></div>
<div class="exp " style="left:85px;top:156px"></div>
<svg class="ic" style="left:100px;top:153px" width="16" height="16"><use href="#i_folder"/></svg>
<div class="t" style="left:121px;top:157px;font-size:11px;letter-spacing:-0.2px;">UserGVLs</div>
<div class="hd" style="left:110px;top:179px;width:10px"></div>
<svg class="ic" style="left:120px;top:172px" width="16" height="16"><use href="#i_globe"/></svg>
<div class="t" style="left:141px;top:176px;font-size:11px;letter-spacing:-0.2px;">Disables</div>
<div class="hd" style="left:110px;top:198px;width:10px"></div>
<svg class="ic" style="left:120px;top:191px" width="16" height="16"><use href="#i_globe"/></svg>
<div class="t" style="left:141px;top:195px;font-size:11px;letter-spacing:-0.2px;">Qualities</div>
<div class="hd" style="left:110px;top:217px;width:10px"></div>
<svg class="ic" style="left:120px;top:210px" width="16" height="16"><use href="#i_globe"/></svg>
<div class="t" style="left:141px;top:214px;font-size:11px;letter-spacing:-0.2px;">ReqDiagnostics</div>
<div class="hd" style="left:94px;top:236px;width:6px"></div>
<div class="exp " style="left:85px;top:232px"></div>
<svg class="ic" style="left:100px;top:229px" width="16" height="16"><use href="#i_folder"/></svg>
<div class="t" style="left:121px;top:233px;font-size:11px;letter-spacing:-0.2px;">UserPOUs</div>
<div class="hd" style="left:110px;top:255px;width:10px"></div>
<svg class="ic" style="left:120px;top:248px" width="16" height="16"><use href="#i_prg"/></svg>
<div class="t" style="left:141px;top:252px;font-size:11px;letter-spacing:-0.2px;">StartPrg (PRG)</div>
<div class="hd" style="left:110px;top:274px;width:10px"></div>
<svg class="ic" style="left:120px;top:267px" width="16" height="16"><use href="#i_prg"/></svg>
<div class="t" style="left:141px;top:271px;font-size:11px;letter-spacing:-0.2px;">UserPrg (PRG)</div>
<div class="hd" style="left:90px;top:293px;width:10px"></div>
<svg class="ic" style="left:100px;top:286px" width="16" height="16"><use href="#i_lib"/></svg>
<div class="t" style="left:121px;top:290px;font-size:11px;letter-spacing:-0.2px;">Library Manager</div>
<div class="hd" style="left:94px;top:312px;width:6px"></div>
<div class="exp " style="left:85px;top:308px"></div>
<svg class="ic" style="left:100px;top:305px" width="16" height="16"><use href="#i_task"/></svg>
<div class="t" style="left:121px;top:309px;font-size:11px;letter-spacing:-0.2px;">Task Configuration</div>
<div class="hd" style="left:114px;top:331px;width:6px"></div>
<div class="exp " style="left:105px;top:327px"></div>
<svg class="ic" style="left:120px;top:324px" width="16" height="16"><use href="#i_mtask"/></svg>
<div class="t" style="left:141px;top:328px;font-size:11px;letter-spacing:-0.2px;">MainTask</div>
<div class="hd" style="left:130px;top:350px;width:10px"></div>
<svg class="ic" style="left:140px;top:343px" width="16" height="16"><use href="#i_mprg"/></svg>
<div class="t" style="left:161px;top:347px;font-size:11px;letter-spacing:-0.2px;">MainPrg</div>
<div class="hd" style="left:54px;top:369px;width:7px"></div>
<div class="exp " style="left:45px;top:365px"></div>
<svg class="ic" style="left:61px;top:362px" width="16" height="16"><use href="#i_cpu"/></svg>
<div class="t" style="left:82px;top:366px;font-size:11px;letter-spacing:-0.2px;">CPU (XF325-W)</div>
<div class="hd" style="left:72px;top:388px;width:10px"></div>
<svg class="ic" style="left:82px;top:381px" width="16" height="16"><use href="#i_conn"/></svg>
<div class="t" style="left:102px;top:385px;font-size:11px;letter-spacing:-0.2px;">COM 1</div>
<div class="hd" style="left:72px;top:407px;width:10px"></div>
<svg class="ic" style="left:82px;top:400px" width="16" height="16"><use href="#i_conn"/></svg>
<div class="t" style="left:102px;top:404px;font-size:11px;letter-spacing:-0.2px;">NET 1</div>
<div class="hd" style="left:72px;top:426px;width:10px"></div>
<svg class="ic" style="left:82px;top:419px" width="16" height="16"><use href="#i_conn"/></svg>
<div class="t" style="left:102px;top:423px;font-size:11px;letter-spacing:-0.2px;">NET 2</div>
<div class="hd" style="left:72px;top:445px;width:10px"></div>
<svg class="ic" style="left:82px;top:438px" width="16" height="16"><use href="#i_conn"/></svg>
<div class="t" style="left:102px;top:442px;font-size:11px;letter-spacing:-0.2px;">CAN</div>
<div class="hd" style="left:72px;top:464px;width:10px"></div>
<svg class="ic" style="left:82px;top:457px" width="16" height="16"><use href="#i_conn"/></svg>
<div class="t" style="left:102px;top:461px;font-size:11px;letter-spacing:-0.2px;">BUS</div>
</div>
<div class="a" style="left:0px;top:834px;width:249px;height:21px;background:#f0f0f0;border-top:1px solid #a8a8a8"></div>
<div class="a" style="left:1px;top:834px;width:64px;height:20px;background:#fff;border:1px solid #a8a8a8;border-top:none;border-radius:0 0 3px 3px"></div>
<svg class="ic" style="left:3px;top:836px" width="16" height="16"><use href="#i_devtab"/></svg>
<div class="t" style="left:22px;top:839px;font-size:10.6px;color:#000">Devices</div>
<svg class="ic" style="left:68px;top:836px" width="16" height="16"><use href="#i_poutab"/></svg>
<div class="t" style="left:87px;top:839px;font-size:10.6px;color:#555">POUs</div>
<div class="a" style="left:253px;top:97px;width:1143px;height:759px;border:1px solid #a0a0a0;background:#fff"></div>
<div class="a" style="left:254px;top:98px;width:1141px;height:20px;background:#f0f0f0;border-bottom:1px solid #dadada"></div>
<svg class="ic" style="left:255px;top:99px" width="112" height="21" viewBox="0 0 112 21"><path d="M1 19.5 L3 19.5 L19 2.5 Q20 1.5 21.5 1.5 L107 1.5 Q109.5 1.5 109.5 4 L109.5 20 L1 20Z" fill="#fff"/><path d="M0 19.5 L3 19.5 L19 2.5 Q20 1.5 21.5 1.5 L107 1.5 Q109.5 1.5 109.5 4 L109.5 20" fill="none" stroke="#9a9a9a"/></svg>
<svg class="ic" style="left:274px;top:102px" width="16" height="16"><use href="#i_prg"/></svg>
<div class="t" style="left:296px;top:104px;font-weight:bold;font-size:11.6px">UserPrg</div>
<svg class="ic" style="left:351px;top:105px" width="9" height="9" viewBox="0 0 9 9"><path d="M1 1 L8 8 M8 1 L1 8" stroke="#000" stroke-width="2"/></svg>
<svg class="ic" style="left:1381px;top:107px" width="9" height="5" viewBox="0 0 9 5"><path d="M0 0 L9 0 L4.5 5Z" fill="#000"/></svg>
<div class="a" style="left:301px;top:119px;width:2px;height:99px;background:#d4d4d4"></div>
<div class="t m" style="left:284px;top:123px;font-size:11.5px;color:#4a8ac0">10</div>
<div class="t m" style="left:324px;top:123px;font-size:12px;color:#000">&nbsp;&nbsp;&nbsp;&nbsp;Output_2: <span style="color:#0000e0">BOOL;</span></div>
<div class="t m" style="left:284px;top:140px;font-size:11.5px;color:#4a8ac0">11</div>
<div class="t m" style="left:324px;top:140px;font-size:12px;color:#000">&nbsp;&nbsp;&nbsp;&nbsp;TON_0: TON;</div>
<div class="t m" style="left:284px;top:157px;font-size:11.5px;color:#4a8ac0">12</div>
<div class="t m" style="left:324px;top:157px;font-size:12px;color:#000">&nbsp;&nbsp;&nbsp;&nbsp;TON_1: TON;</div>
<div class="t m" style="left:284px;top:174px;font-size:11.5px;color:#4a8ac0">13</div>
<div class="t m" style="left:324px;top:174px;font-size:12px;color:#000">&nbsp;&nbsp;&nbsp;&nbsp;time_output: <span style="color:#0000e0">TIME;</span></div>
<div class="t m" style="left:284px;top:191px;font-size:11.5px;color:#4a8ac0">14</div>
<div class="t m" style="left:324px;top:191px;font-size:12px;color:#000"><span style="color:#0000e0">END_VAR</span></div>
<div class="a" style="left:1355px;top:119px;width:15px;height:99px;background:#f0f0f0"></div>
<div class="a" style="left:1362px;top:176px;width:2px;height:21px;background:#808080"></div>
<div class="a" style="left:1370px;top:119px;width:25px;height:99px;background:linear-gradient(to right,#f6f6f4,#e6e6de 55%,#c8c8b8)"></div>
<div class="a" style="left:1371px;top:121px;width:21px;height:20px;background:#e8f0fc;border:1px solid #4f7fd8"></div>
<svg class="ic" style="left:1374px;top:124px" width="14" height="14" viewBox="0 0 14 14"><path d="M2 1.5H7M2 3.5H12M4 5.5H11M4 7.5H10M3 9.5H12M2 11.5H12M2 13H9" stroke="#000"/><path d="M2 1.5H7" stroke="#0000ff"/><path d="M3 9.5H12" stroke="#00a000"/><path d="M2 13H9" stroke="#0000ff"/></svg>
<svg class="ic" style="left:1374px;top:146px" width="15" height="15" viewBox="0 0 15 15"><rect x="0.5" y="1.5" width="13" height="13" fill="#fff" stroke="#000"/><rect x="0" y="1" width="14" height="2" fill="#0000ff"/><path d="M1 6.5H13M1 9.5H13M1 12.5H13M5.5 3V14M9.5 3V14" stroke="#aaa"/></svg>
<div class="a" style="left:1286px;top:198px;width:48px;height:21px;background:#f0f0f0;border:1px solid #c0c0c0"></div>
<div class="a" style="left:1300px;top:204px;width:20px;height:10px;overflow:hidden"><div class="t" style="left:0;top:1px;font-size:11px;color:#201860">100</div></div>
<div class="a" style="left:1334px;top:198px;width:20px;height:21px;background:#f0f0f0;border:1px solid #c0c0c0"></div>
<svg class="ic" style="left:1336px;top:200px" width="16" height="16"><use href="#i_zoomfit"/></svg>
<div class="a" style="left:254px;top:218px;width:1141px;height:6px;background:#f0f0f0;border-top:1px solid #9a9a9a;border-bottom:1px solid #9a9a9a"></div>
<svg class="ic" style="left:812px;top:219px" width="25" height="5" viewBox="0 0 25 5"><path d="M0.5 4.5 L4.5 0.5 L8.5 4.5Z" fill="#888" stroke="#666" stroke-width=".6"/><path d="M16 0.5 L20.5 4.5 L24.5 0.5Z" fill="#888" stroke="#666" stroke-width=".6"/></svg>
<div class="a" style="left:297px;top:224px;width:2px;height:337px;background:#178a8a"></div>
<div class="a" style="left:299px;top:224px;width:14px;height:337px;background:#f0f0f0"></div>
<div class="t m" style="left:289px;top:227px;font-size:9px;color:#107a90">1</div>
<div class="t m" style="left:289px;top:395px;font-size:9px;color:#107a90">2</div>
<div class="a" style="left:313px;top:392px;width:1082px;height:168px;background:#fffde0"></div>
<div class="a" style="left:299px;top:391px;width:1096px;height:1px;background:#d0d0d0"></div>
<div class="a" style="left:299px;top:560px;width:1096px;height:1px;background:#d0d0d0"></div>
<div class="a" style="left:324px;top:224px;width:1px;height:335px;background:#000"></div>
<div class="gr" style="left:341px;top:272px;width:65px;height:16px"></div>
<div class="gr" style="left:349px;top:337px;width:65px;height:16px"></div>
<div class="gr" style="left:438px;top:257px;width:65px;height:16px"></div>
<div class="t m" style="left:350px;top:291px;font-size:11px">Input_2</div>
<div class="a" style="left:325px;top:311px;width:105px;height:1px;background:#000"></div>
<div class="a" style="left:365px;top:304px;width:3px;height:15px;background:#eef2fa;border:1px solid #2f4f86"></div>
<div class="a" style="left:378px;top:304px;width:4px;height:15px;background:#eef2fa;border:1px solid #2f4f86"></div>
<div class="a" style="left:368px;top:311px;width:10px;height:1px;background:#fff"></div>
<div class="t m" style="left:383px;top:356px;font-size:11px;color:#8a8000">T#5S</div>
<div class="a" style="left:413px;top:359px;width:17px;height:1px;background:#000"></div>
<div class="t m" style="left:454px;top:275px;font-size:11px">TON_0</div>
<div class="gr" style="left:341px;top:440px;width:65px;height:16px"></div>
<div class="gr" style="left:349px;top:505px;width:65px;height:16px"></div>
<div class="gr" style="left:438px;top:425px;width:65px;height:16px"></div>
<div class="t m" style="left:350px;top:459px;font-size:11px">Input_2</div>
<div class="a" style="left:325px;top:479px;width:105px;height:1px;background:#000"></div>
<div class="a" style="left:365px;top:472px;width:3px;height:15px;background:#eef2fa;border:1px solid #2f4f86"></div>
<div class="a" style="left:378px;top:472px;width:4px;height:15px;background:#eef2fa;border:1px solid #2f4f86"></div>
<div class="a" style="left:368px;top:479px;width:10px;height:1px;background:#fffde0"></div>
<div class="t m" style="left:383px;top:524px;font-size:11px;color:#8a8000">T#5S</div>
<div class="a" style="left:413px;top:527px;width:17px;height:1px;background:#000"></div>
<div class="t m" style="left:454px;top:443px;font-size:11px">TON_1</div>
<div class="a" style="left:430px;top:289px;width:80px;height:86px;background:#e0e8f5;border-top:1px solid #2f4f86;border-bottom:1px solid #2f4f86"></div>
<div class="t m" style="left:461px;top:294px;font-size:11px;font-weight:bold">TON</div>
<div class="t m" style="left:433px;top:308px;font-size:11px">IN</div>
<div class="t m" style="left:500px;top:308px;font-size:11px">Q</div>
<div class="t m" style="left:494px;top:340px;font-size:11px">ET</div>
<div class="t m" style="left:433px;top:356px;font-size:11px">PT</div>
<svg class="ic" style="left:455px;top:304px" width="30" height="30"><use href="#i_clock"/></svg>
<div class="a" style="left:510px;top:311px;width:700px;height:1px;background:#000"></div>
<div class="a" style="left:513px;top:344px;width:6px;height:1px;background:#000"></div>
<div class="t m" style="left:523px;top:340px;font-size:11px">time_output</div>
<div class="gr" style="left:519px;top:322px;width:65px;height:16px"></div>
<div class="gr" style="left:1185px;top:272px;width:65px;height:16px"></div>
<div class="t m" style="left:1191px;top:291px;font-size:11px">Output_1</div>
<svg class="ic" style="left:1207px;top:303px" width="21" height="17" viewBox="0 0 21 17"><path d="M5 1 Q2 1 2 4 V13 Q2 16 5 16 L5 14.5 Q4 14.5 4 13 V4 Q4 2.5 5 2.5Z" fill="#eef2fa" stroke="#2f4f86" stroke-width=".9"/><path d="M15 1 Q18 1 18 4 V13 Q18 16 15 16 L15 14.5 Q16 14.5 16 13 V4 Q16 2.5 15 2.5Z" fill="#eef2fa" stroke="#2f4f86" stroke-width=".9"/></svg>
<div class="a" style="left:430px;top:456px;width:83px;height:89px;background:#7a1f48"></div>
<div class="a" style="left:431px;top:459px;width:78px;height:82px;background:#f6e4ea;border:1px dotted #555"></div>
<div class="t m" style="left:461px;top:462px;font-size:11px;font-weight:bold">TON</div>
<div class="t m" style="left:433px;top:476px;font-size:11px">IN</div>
<div class="t m" style="left:500px;top:476px;font-size:11px">Q</div>
<div class="t m" style="left:494px;top:492px;font-size:11px">ET</div>
<div class="t m" style="left:433px;top:524px;font-size:11px">PT</div>
<svg class="ic" style="left:455px;top:472px" width="30" height="30"><use href="#i_clock"/></svg>
<div class="a" style="left:511px;top:480px;width:27px;height:1px;background:#000"></div>
<div class="a" style="left:513px;top:496px;width:6px;height:1px;background:#000"></div>
<div class="a" style="left:519px;top:489px;width:17px;height:15px;border:1px solid #d0d8f0;background:#fffde0"></div>
<div class="rb" style="left:310px;top:266px;width:120px;height:120px"></div>
<div class="rb" style="left:510px;top:268px;width:814px;height:120px"></div>
<div class="rb" style="left:308px;top:432px;width:123px;height:128px"></div>
<div class="rb" style="left:513px;top:427px;width:84px;height:133px"></div>
<div class="t" style="left:688px;top:412.0px;font-size:25px;letter-spacing:1px;color:#e3202a">Output parameters will always be optional in</div>
<div class="t" style="left:688px;top:447.6px;font-size:25px;letter-spacing:1px;color:#e3202a">function blocks because the block's own</div>
<div class="t" style="left:688px;top:483.2px;font-size:25px;letter-spacing:1px;color:#e3202a">internal variables can be used to</div>
<div class="t" style="left:688px;top:518.8px;font-size:25px;letter-spacing:1px;color:#e3202a">move/analyze the respective value</div>
<div class="a" style="left:254px;top:839px;width:1141px;height:16px;background:#f0f0f0"></div>
<div class="a" style="left:271px;top:846px;width:43px;height:2px;background:#808080"></div>
<div class="a" style="left:1250px;top:818px;width:20px;height:20px;background:#fff;border:1px solid #b0b0b0"></div>
<svg class="ic" style="left:1255px;top:821px" width="10" height="14" viewBox="0 0 10 14"><path d="M1 1 L1 11 L3.5 8.5 L6 13 L7.5 12 L5.2 7.6 L8.8 7.4Z" fill="#000"/></svg>
<div class="a" style="left:1270px;top:818px;width:20px;height:20px;background:#f0f0f0;border:1px solid #b0b0b0"></div>
<svg class="ic" style="left:1273px;top:821px" width="14" height="14" viewBox="0 0 14 14"><path d="M7 1V13M1 7H13" stroke="#000" stroke-width="1.2"/><path d="M7 0 L5 2.5H9Z M7 14 L5 11.5H9Z M0 7 L2.5 5V9Z M14 7 L11.5 5V9Z" fill="#000"/></svg>
<div class="a" style="left:1290px;top:818px;width:20px;height:20px;background:#f0f0f0;border:1px solid #b0b0b0"></div>
<svg class="ic" style="left:1292px;top:820px" width="16" height="16" viewBox="0 0 16 16"><circle cx="6.5" cy="6.5" r="5" fill="#dbe8f8" stroke="#6a8ac8" stroke-width="1.2"/><circle cx="5" cy="5" r="2" fill="#fff"/><path d="M10 10 L14.5 14.5" stroke="#c8a040" stroke-width="2.4"/></svg>
<div class="a" style="left:1330px;top:818px;width:45px;height:20px;background:#f0f0f0;border:1px solid #b0b0b0"></div>
<div class="t" style="left:1339px;top:823px;font-size:11.5px;color:#222">90 %</div>
<div class="a" style="left:1375px;top:818px;width:20px;height:20px;background:#f0f0f0;border:1px solid #b0b0b0"></div>
<svg class="ic" style="left:1377px;top:820px" width="16" height="16"><use href="#i_zoomfit"/></svg>
<div class="a" style="left:1400px;top:97px;width:198px;height:759px;border:1px solid #8a8a8a;background:#f0f0f0"></div>
<div class="a" style="left:1401px;top:98px;width:197px;height:23px;background:#bfcddb;border-bottom:1px solid #8a8a8a"></div>
<div class="t" style="left:1405px;top:104px;font-size:11.5px">ToolBox</div>
<svg class="ic" style="left:1543px;top:108px" width="9" height="5" viewBox="0 0 9 5"><path d="M0 0 L9 0 L4.5 5Z" fill="#000"/></svg>
<svg class="ic" style="left:1563px;top:103px" width="9" height="11" viewBox="0 0 9 11"><rect x="2.3" y="1.8" width="4.4" height="4.7" fill="none" stroke="#000" stroke-width="1.5"/><path d="M0.5 7.3 H8.5 M4.5 7 V11" stroke="#000" stroke-width="1.4"/></svg>
<svg class="ic" style="left:1583px;top:105px" width="9" height="9" viewBox="0 0 9 9"><path d="M1 1 L8 8 M8 1 L1 8" stroke="#000" stroke-width="2"/></svg>
<div class="tbx p" style="left:1407px;top:126px"></div>
<div class="t" style="left:1424px;top:125px;font-weight:bold;font-size:11.7px">General</div>
<div class="tbx p" style="left:1407px;top:145px"></div>
<div class="t" style="left:1424px;top:144px;font-weight:bold;font-size:11.7px">Boolean Operators</div>
<div class="tbx p" style="left:1407px;top:164px"></div>
<div class="t" style="left:1424px;top:163px;font-weight:bold;font-size:11.7px">Math Operators</div>
<div class="tbx p" style="left:1407px;top:183px"></div>
<div class="t" style="left:1424px;top:182px;font-weight:bold;font-size:11.7px">Other Operators</div>
<div class="tbx " style="left:1407px;top:202px"></div>
<div class="t" style="left:1424px;top:201px;font-weight:bold;font-size:11.7px">Function Blocks</div>
<svg class="ic" style="left:1441px;top:218px" width="17" height="16"><use href="#tb_rtrig"/></svg>
<div class="t" style="left:1464px;top:221px;font-size:10.5px">R_TRIG</div>
<svg class="ic" style="left:1441px;top:237px" width="17" height="16"><use href="#tb_ftrig"/></svg>
<div class="t" style="left:1464px;top:240px;font-size:10.5px">F_TRIG</div>
<svg class="ic" style="left:1441px;top:256px" width="17" height="16"><use href="#tb_rs"/></svg>
<div class="t" style="left:1464px;top:259px;font-size:10.5px">RS</div>
<svg class="ic" style="left:1441px;top:275px" width="17" height="16"><use href="#tb_sr"/></svg>
<div class="t" style="left:1464px;top:278px;font-size:10.5px">SR</div>
<div class="a" style="left:1442px;top:294px;width:128px;height:18px;border:1px solid #a8a8a8"></div>
<svg class="ic" style="left:1441px;top:294px" width="17" height="16"><use href="#tb_ton"/></svg>
<div class="t" style="left:1464px;top:297px;font-size:10.5px">TON</div>
<svg class="ic" style="left:1441px;top:313px" width="17" height="16"><use href="#tb_tof"/></svg>
<div class="t" style="left:1464px;top:316px;font-size:10.5px">TOF</div>
<svg class="ic" style="left:1441px;top:332px" width="17" height="16"><use href="#tb_ctu"/></svg>
<div class="t" style="left:1464px;top:335px;font-size:10.5px">CTU</div>
<svg class="ic" style="left:1441px;top:351px" width="17" height="16"><use href="#tb_ctd"/></svg>
<div class="t" style="left:1464px;top:354px;font-size:10.5px">CTD</div>
<div class="tbx p" style="left:1407px;top:373px"></div>
<div class="t" style="left:1424px;top:372px;font-weight:bold;font-size:11.7px">Ladder Elements</div>
<div class="tbx p" style="left:1407px;top:392px"></div>
<div class="t" style="left:1424px;top:391px;font-weight:bold;font-size:11.7px">POUs</div>
<div class="a" style="left:0px;top:855px;width:1598px;height:23px;background:#f3f3f3;border-top:1px solid #a0a0a0;border-bottom:1px solid #d9d9d9"></div>
<div class="a" style="left:2px;top:859px;width:318px;height:20px;background:#f0f0f0;border:1px solid #8a8a8a;border-bottom:none;border-radius:3px 3px 0 0"></div>
<svg class="ic" style="left:6px;top:861px" width="16" height="16"><use href="#i_msg"/></svg>
<div class="t" style="left:28px;top:863px;font-size:11.5px;color:#666">Messages - Total 0 error(s), 0 warning(s), 20 message(s)</div>
<div class="a" style="left:0px;top:878px;width:1598px;height:21px;background:#f0f0f0;border-top:1px solid #dcdcdc"></div>
<div class="t" style="left:985px;top:884px;font-size:11px;color:#222">Last build:</div>
<svg class="ic" style="left:1040px;top:882px" width="13" height="13" viewBox="0 0 13 13"><circle cx="6.5" cy="6.5" r="5.5" fill="#e02020" stroke="#a00000"/><path d="M4 4 L9 9 M9 4 L4 9" stroke="#fff" stroke-width="1.6"/></svg>
<div class="t" style="left:1058px;top:884px;font-size:11px;color:#222">0</div>
<svg class="ic" style="left:1069px;top:882px" width="13" height="13" viewBox="0 0 13 13"><circle cx="6.5" cy="6.5" r="5.5" fill="#f8f020" stroke="#606000"/><path d="M6.5 3V8" stroke="#000" stroke-width="1.5"/><circle cx="6.5" cy="10" r=".9" fill="#000"/></svg>
<div class="t" style="left:1086px;top:884px;font-size:11px;color:#222">0</div>
<div class="t" style="left:1115px;top:884px;font-size:10.4px;color:#222">Precompile</div>
<svg class="ic" style="left:1171px;top:882px" width="16" height="14" viewBox="0 0 16 14"><path d="M2 7 L6 11 L14 2" stroke="#20a020" stroke-width="2.2" fill="none"/></svg>
<div class="a" style="left:1214px;top:880px;width:1px;height:19px;background:#d8d8d8"></div>
<div class="a" style="left:1218px;top:881px;width:76px;height:18px;background:#ff0000"></div>
<div class="t" style="left:1223px;top:885px;font-size:10.8px;color:#202020">SIMULATION</div>
<svg class="ic" style="left:1299px;top:882px" width="18" height="17" viewBox="0 0 18 17"><circle cx="6" cy="6" r="4.5" fill="none" stroke="#8888c8" stroke-width="2.5"/><circle cx="13" cy="3" r="2.3" fill="#10c010"/><rect x="8.5" y="7.5" width="7" height="8" fill="#fff" stroke="#222"/><path d="M10 10H14M10 12.5H14" stroke="#222"/></svg>
<div class="a" style="left:1318px;top:880px;width:1px;height:19px;background:#d8d8d8"></div>
<div class="t" style="left:1383px;top:884px;font-size:11.7px;color:#222">Project user: (nobody)</div>
<div class="a" style="left:1558px;top:880px;width:1px;height:19px;background:#d8d8d8"></div>
<svg class="ic" style="left:1563px;top:881px" width="14" height="16" viewBox="0 0 14 16"><path d="M7 1 L13 3 V8 Q13 13 7 15 Q1 13 1 8 V3Z" fill="#e8d898" stroke="#555"/><path d="M7 1 V15 Q1 13 1 8 V3Z" fill="#9a9a70"/></svg>
<div class="a" style="left:1581px;top:880px;width:1px;height:19px;background:#d8d8d8"></div>
</body></html>
